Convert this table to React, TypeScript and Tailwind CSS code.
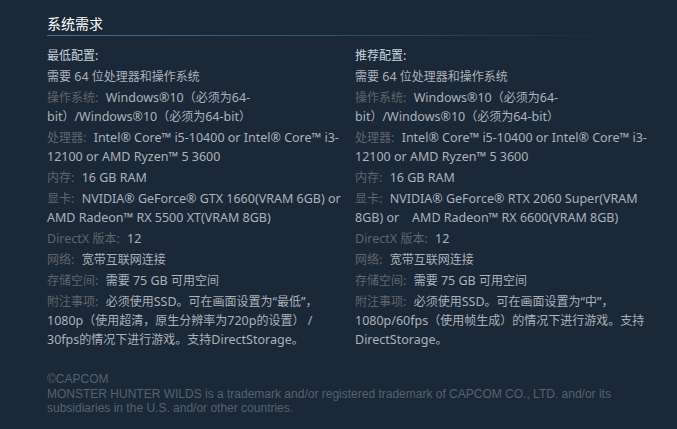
import React from 'react';

type Req = { label?: string; lines: string[] };

const minReqs: Req[] = [
  { lines: ['需要 64 位处理器和操作系统'] },
  { label: '操作系统:', lines: ['Windows®10（必须为64-', 'bit）/Windows®10（必须为64-bit）'] },
  { label: '处理器:', lines: ['Intel® Core™ i5-10400 or Intel® Core™ i3-', '12100 or AMD Ryzen™ 5 3600'] },
  { label: '内存:', lines: ['16 GB RAM'] },
  { label: '显卡:', lines: ['NVIDIA® GeForce® GTX 1660(VRAM 6GB) or', 'AMD Radeon™ RX 5500 XT(VRAM 8GB)'] },
  { label: 'DirectX 版本:', lines: ['12'] },
  { label: '网络:', lines: ['宽带互联网连接'] },
  { label: '存储空间:', lines: ['需要 75 GB 可用空间'] },
  {
    label: '附注事项:',
    lines: [
      '必须使用SSD。可在画面设置为“最低”，',
      '1080p（使用超清，原生分辨率为720p的设置） /',
      '30fps的情况下进行游戏。支持DirectStorage。',
    ],
  },
];

const recReqs: Req[] = [
  { lines: ['需要 64 位处理器和操作系统'] },
  { label: '操作系统:', lines: ['Windows®10（必须为64-', 'bit）/Windows®10（必须为64-bit）'] },
  { label: '处理器:', lines: ['Intel® Core™ i5-10400 or Intel® Core™ i3-', '12100 or AMD Ryzen™ 5 3600'] },
  { label: '内存:', lines: ['16 GB RAM'] },
  { label: '显卡:', lines: ['NVIDIA® GeForce® RTX 2060 Super(VRAM', '8GB) or\u00a0\u00a0\u00a0 AMD Radeon™ RX 6600(VRAM 8GB)'] },
  { label: 'DirectX 版本:', lines: ['12'] },
  { label: '网络:', lines: ['宽带互联网连接'] },
  { label: '存储空间:', lines: ['需要 75 GB 可用空间'] },
  {
    label: '附注事项:',
    lines: ['必须使用SSD。可在画面设置为“中”，', '1080p/60fps（使用帧生成）的情况下进行游戏。支持', 'DirectStorage。'],
  },
];

// CJK glyphs in the shot run a bit smaller than the latin ones
const cjkRe = /([\u3000-\u303f\u4e00-\u9fff\uff00-\uffef]+)/;

const Mixed: React.FC<{ text: string }> = ({ text }) => (
  <>
    {text.split(cjkRe).map((part, i) =>
      i % 2 === 1 ? (
        <span key={i} className="text-[12px]">
          {part}
        </span>
      ) : (
        <React.Fragment key={i}>{part}</React.Fragment>
      )
    )}
  </>
);

const ReqColumn: React.FC<{ title: string; items: Req[]; className?: string }> = ({ title, items, className }) => (
  <div className={className}>
    <div className="text-[#c6d4df] leading-[19px] mb-[2px]">
      <Mixed text={title} />
    </div>
    <ul>
      {items.map((item, i) => (
        <li key={i} className="leading-[19px] mb-[2px] whitespace-nowrap">
          {item.label && (
            <span className="text-[#60656b] mr-[4px]">
              <Mixed text={item.label} />{' '}
            </span>
          )}
          {item.lines.map((line, j) => (
            <React.Fragment key={j}>
              {j > 0 && <br />}
              <Mixed text={line} />
            </React.Fragment>
          ))}
        </li>
      ))}
    </ul>
  </div>
);

export default function App() {
  return (
    <div className="min-h-screen w-full bg-[#1b2838] pl-[47px] pr-[20px] pt-[14px] font-['Noto_Sans','Noto_Sans_CJK_SC',sans-serif]">
      <h2 className="text-[14px] leading-[20px] text-white">系统需求</h2>
      <div className="mt-px h-px w-[576px] bg-gradient-to-r from-[#3d7597] via-[#2d5470] to-transparent" />

      <div className="mt-[10px] flex text-[12.5px] text-[#acb2b8]">
        <ReqColumn title="最低配置:" items={minReqs} className="w-[308px] shrink-0" />
        <ReqColumn title="推荐配置:" items={recReqs} className="flex-1" />
      </div>

      <div className="mt-[21px] font-['Liberation_Sans',Arial,sans-serif] text-[12px] leading-[14.5px] text-[#56626d]">
        ©CAPCOM
        <br />
        MONSTER HUNTER WILDS is a trademark and/or registered trademark of CAPCOM CO., LTD. and/or its
        <br />
        subsidiaries in the U.S. and/or other countries.
      </div>
    </div>
  );
}
